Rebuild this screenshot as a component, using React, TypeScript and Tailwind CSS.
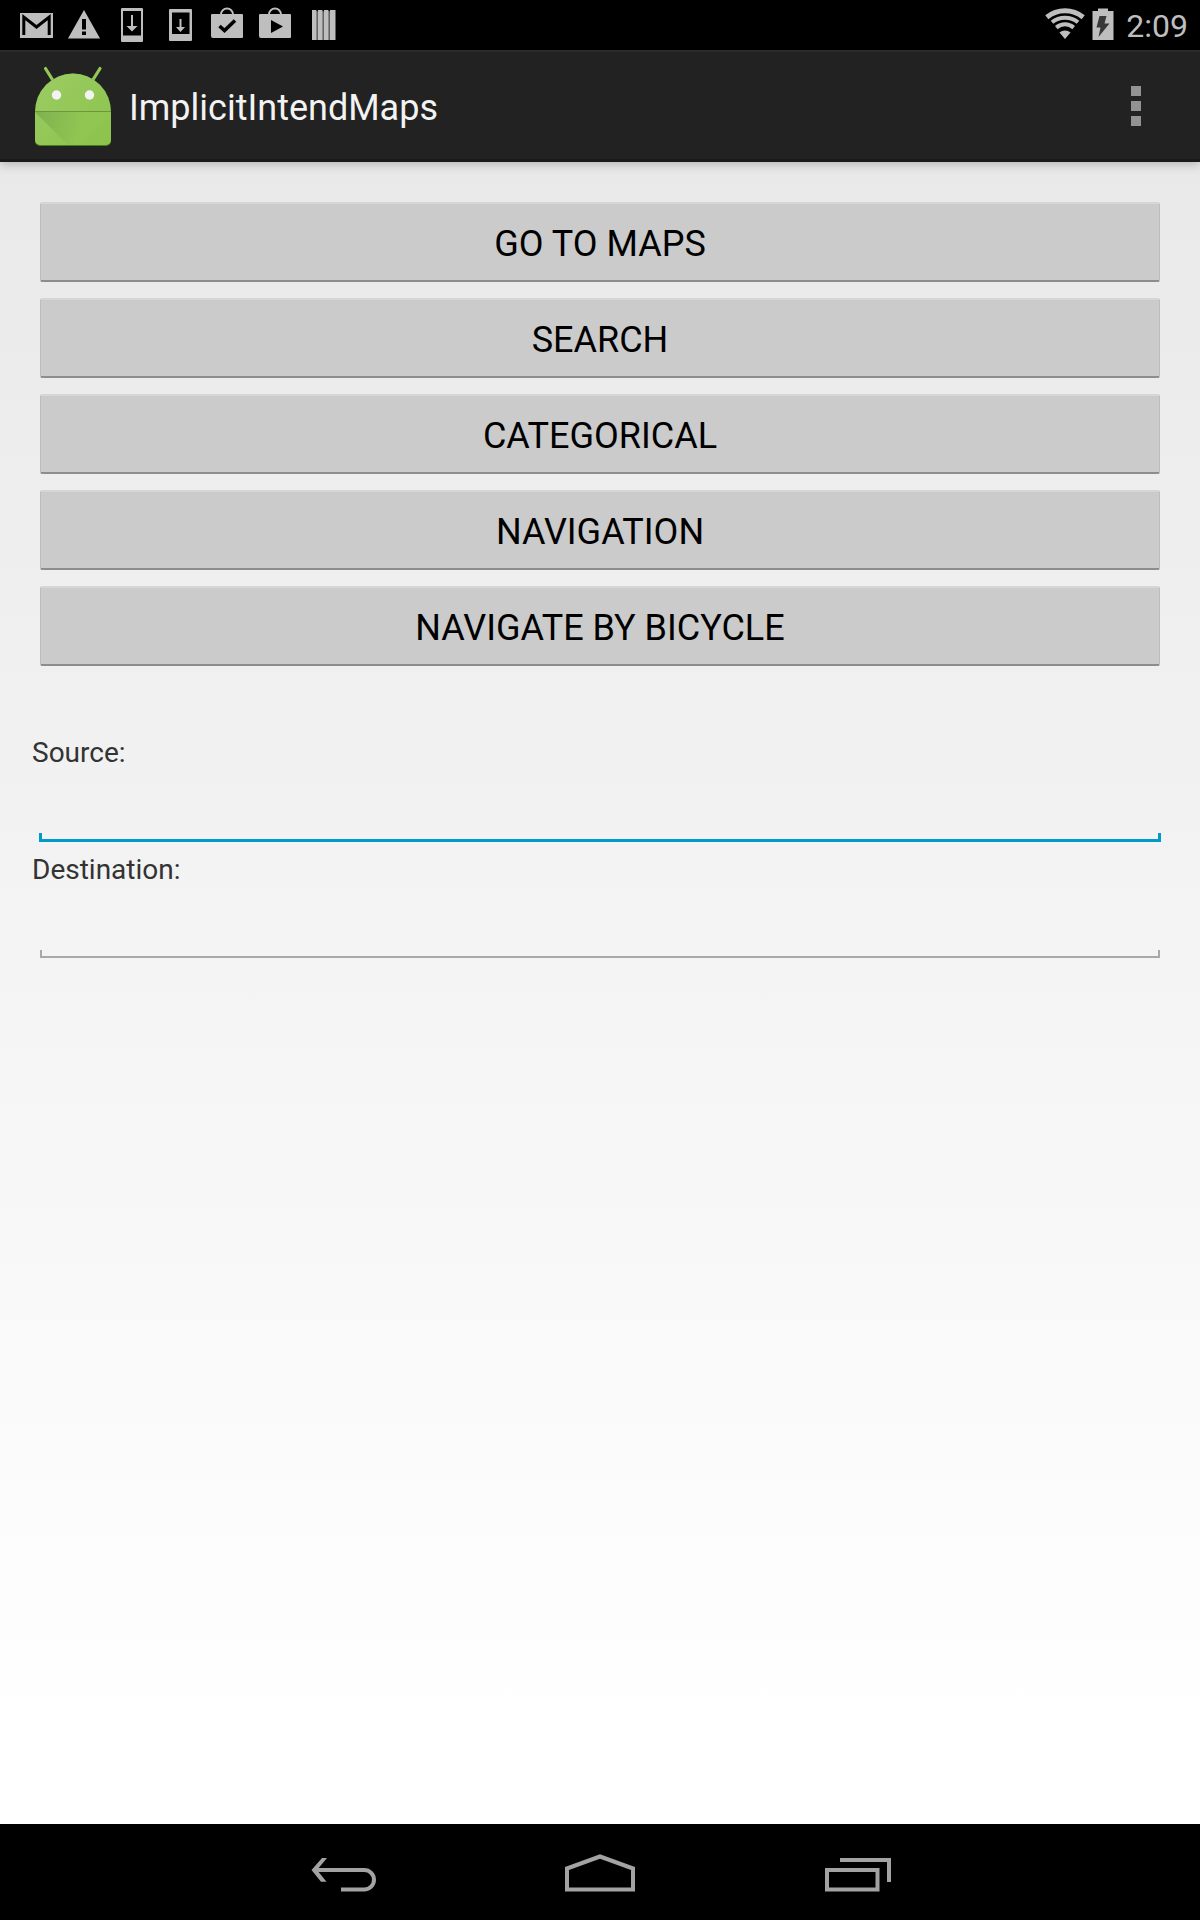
import React from "react";

const actions = ["Go to maps", "Search", "Categorical", "Navigation", "Navigate by bicycle"];

function StatusIcon({ label, children }: { label: string; children: React.ReactNode }) {
  return (
    <svg role="img" aria-label={label} viewBox="0 0 48 50" className="h-[50px] w-12" fill="#bebebe">
      {children}
    </svg>
  );
}

function StatusBar() {
  return (
    <div className="flex h-[50px] items-center justify-between bg-black px-3 text-[#bebebe]">
      <div className="flex">
        <StatusIcon label="Mail">
          <path d="M8 13H41V38H8Z" />
          <path d="M11.8 35V17L24.5 27L37.2 17V35" fill="none" stroke="#000" strokeWidth="3" />
        </StatusIcon>
        <StatusIcon label="Warning">
          <path d="M24 10L40 38.5H8Z" />
          <path d="M22 19H26V29.5H22ZM22 31.5H26V35H22Z" fill="#000" />
        </StatusIcon>
        <StatusIcon label="Download">
          <path fillRule="evenodd" d="M14 8H34a1 1 0 0 1 1 1V41a1 1 0 0 1-1 1H14a1 1 0 0 1-1-1V9a1 1 0 0 1 1-1ZM15 11V35.5H33V11Z" />
          <path d="M23 15H25V26H29.5L24 31.5L18.5 26H23Z" />
        </StatusIcon>
        <StatusIcon label="Download">
          <path fillRule="evenodd" d="M14 9H35a1 1 0 0 1 1 1V40a1 1 0 0 1-1 1H14a1 1 0 0 1-1-1V10a1 1 0 0 1 1-1ZM16 12.5V34H33.5V12.5Z" />
          <path d="M23.5 19H25.5V27H29L24.5 32L20 27H23.5Z" />
        </StatusIcon>
        <StatusIcon label="App installed">
          <path d="M8 14H38a1 1 0 0 1 1 1V37a1 1 0 0 1-1 1H9a2 2 0 0 1-2-2V15a1 1 0 0 1 1-1Z" />
          <path d="M17 14.5a6 6 0 0 1 12 0" fill="none" stroke="#bebebe" strokeWidth="1.8" />
          <path d="M15.500 26L20.500 30.500L31 20.500" fill="none" stroke="#000" strokeWidth="3.600" />
        </StatusIcon>
        <StatusIcon label="Play Store">
          <path d="M8 14H38a1 1 0 0 1 1 1V37a1 1 0 0 1-1 1H9a2 2 0 0 1-2-2V15a1 1 0 0 1 1-1Z" />
          <path d="M17 14.5a6 6 0 0 1 12 0" fill="none" stroke="#bebebe" strokeWidth="1.8" />
          <path d="M19 20L31 26.500L19 33Z" fill="#000" />
        </StatusIcon>
        <StatusIcon label="Notification">
          <path d="M12 10H16L17.500 12V40H12ZM18 10H22L23.500 12V40H18ZM24 10H28L29.500 12V40H24ZM30 10H35.500V40H30Z" />
          <path d="M17 11V40M23 11V40M29 11V40" stroke="#666" strokeWidth="1.200" />
        </StatusIcon>
      </div>
      <div className="flex items-center">
        <svg role="img" aria-label="Wi-Fi" viewBox="0 0 40 50" className="mr-[7px] h-[50px] w-10" fill="none" stroke="#bebebe">
          <path d="M1.800 17.200C12.500 8.600 27.500 8.600 38.200 17.200" strokeWidth="5" />
          <path d="M7 22.300C14.500 16.100 25.500 16.100 33 22.300" strokeWidth="4" />
          <path d="M11.300 27.600C16.500 23.200 23.500 23.200 28.700 27.600" strokeWidth="4" />
          <path d="M14.500 32.500C17.600 29.700 22.400 29.700 25.500 32.500L20 38.900Z" fill="#bebebe" stroke="none" />
        </svg>
        <svg role="img" aria-label="Battery charging" viewBox="0 0 22 50" className="mr-3 h-[50px] w-[22px]">
          <path d="M6 8.500H16V11H21.500V40H.5V11H6Z" fill="#bebebe" />
          <path d="M7.500 16H14.500L12.500 23.500H17.500L6.500 37L8.500 27.500H4.500Z" fill="#383838" />
        </svg>
        <time className="pt-0.5 text-[32px] leading-10">2:09</time>
      </div>
    </div>
  );
}

function AppIcon() {
  return (
    <svg role="img" aria-label="Android robot" viewBox="0 0 80 84" className="h-[84px] w-20">
      <defs>
        <linearGradient id="head" x1="0" y1="0" x2="1" y2="1">
          <stop offset="0" stopColor="#9ccc65" />
          <stop offset="1" stopColor="#8bc34a" />
        </linearGradient>
        <linearGradient id="fold" gradientUnits="userSpaceOnUse" x1="2" y1="48" x2="48" y2="64">
          <stop offset="0" stopColor="#33691e" stopOpacity=".25" />
          <stop offset="1" stopColor="#33691e" stopOpacity="0" />
        </linearGradient>
      </defs>
      <path d="M12.500 4.500L20 16.500M67 4.500L59.500 16.500" stroke="#92c854" strokeWidth="3.200" strokeLinecap="round" />
      <path d="M2 48A38 38.500 0 0 1 78 48V77a5 5 0 0 1-5 5H7a5 5 0 0 1-5-5Z" fill="#477d1f" />
      <path d="M2 48A38 38.500 0 0 1 78 48V76a5 5 0 0 1-5 5H7a5 5 0 0 1-5-5Z" fill="url(#head)" />
      <path d="M2 48H60L52 81H35Z" fill="url(#fold)" />
      <path d="M2 47.500H78" stroke="#6d963e" />
      <circle cx="23.500" cy="31" r="4.700" fill="#f3f3f3" />
      <circle cx="56.500" cy="31" r="4.700" fill="#f3f3f3" />
    </svg>
  );
}

function ActionBar() {
  return (
    <header className="relative flex h-28 items-center border-t-2 border-b-3 border-t-[#2a2a2a] border-b-[#1a1a1a] bg-[#222] pr-8 pl-[33px] shadow-[0_2px_10px_rgba(0,0,0,0.25)]">
      <AppIcon />
      <h1 className="ml-4 flex-1 pt-1 text-[36px] leading-10 text-[#f3f3f3]">ImplicitIntendMaps</h1>
      <button type="button" aria-label="More options" className="flex h-16 w-16 flex-col items-center justify-center gap-[5px]">
        <span className="size-2.5 bg-[#939393]" />
        <span className="size-2.5 bg-[#939393]" />
        <span className="size-2.5 bg-[#939393]" />
      </button>
    </header>
  );
}

function Field({ id, label, active = false }: { id: string; label: string; active?: boolean }) {
  return (
    <div className="flex flex-col">
      <label htmlFor={id} className="text-[28px] leading-9 text-[#333]">
        {label}
      </label>
      <div className={active ? "mx-[7px]" : "mx-2"}>
        <input id={id} type="text" className="block h-[62px] w-full bg-transparent px-3 text-[36px] outline-none" />
        <div
          className={
            active
              ? "h-[9px] border-x-3 border-b-3 border-[#0099cc]"
              : "h-2 border-x-2 border-b-2 border-[#a9a9a9]"
          }
        />
      </div>
    </div>
  );
}

function NavigationBar() {
  return (
    <nav className="flex h-24 justify-center bg-black">
      <button type="button" aria-label="Back" className="flex w-64 justify-center">
        <svg viewBox="280 1824 128 96" className="h-24 w-32" fill="none" stroke="#a3a3a3" strokeWidth="4">
          <path d="M341 1889.500H364.250a9.750 9.750 0 0 0 0-19.500H315" />
          <path d="M327 1858H322L311.500 1870L321 1881.800H326.500L317 1870Z" fill="#a3a3a3" stroke="none" />
        </svg>
      </button>
      <button type="button" aria-label="Home" className="flex w-64 justify-center">
        <svg viewBox="536 1824 128 96" className="h-24 w-32" fill="none" stroke="#a3a3a3" strokeWidth="4">
          <path d="M567 1868.500L600 1856.500L633 1868.500V1889.500H567Z" />
        </svg>
      </button>
      <button type="button" aria-label="Recent apps" className="flex w-64 justify-center">
        <svg viewBox="792 1824 128 96" className="h-24 w-32" fill="none" stroke="#a3a3a3" strokeWidth="4">
          <path d="M827 1870H877.500V1889.500H827ZM840 1860H889V1882" />
        </svg>
      </button>
    </nav>
  );
}

export default function App() {
  return (
    <div className="flex min-h-screen flex-col font-[Roboto,sans-serif]">
      <StatusBar />
      <ActionBar />
      <main className="flex-1 bg-linear-to-b from-[#e9e9e9] to-white to-95% px-8 py-10">
        <div className="mx-2 flex flex-col gap-4">
          {actions.map((action) => (
            <button
              key={action}
              type="button"
              className="h-20 rounded-xs border-x border-t-2 border-b-2 border-x-[#bdbdbd] border-t-[#d6d6d6] border-b-[#8d8d8d] bg-[#cbcbcb] pt-1 text-[36px] leading-10 text-black uppercase"
            >
              {action}
            </button>
          ))}
        </div>
        <form className="mt-[69px] flex flex-col gap-2.5">
          <Field id="source" label="Source:" active />
          <Field id="destination" label="Destination:" />
        </form>
      </main>
      <NavigationBar />
    </div>
  );
}
